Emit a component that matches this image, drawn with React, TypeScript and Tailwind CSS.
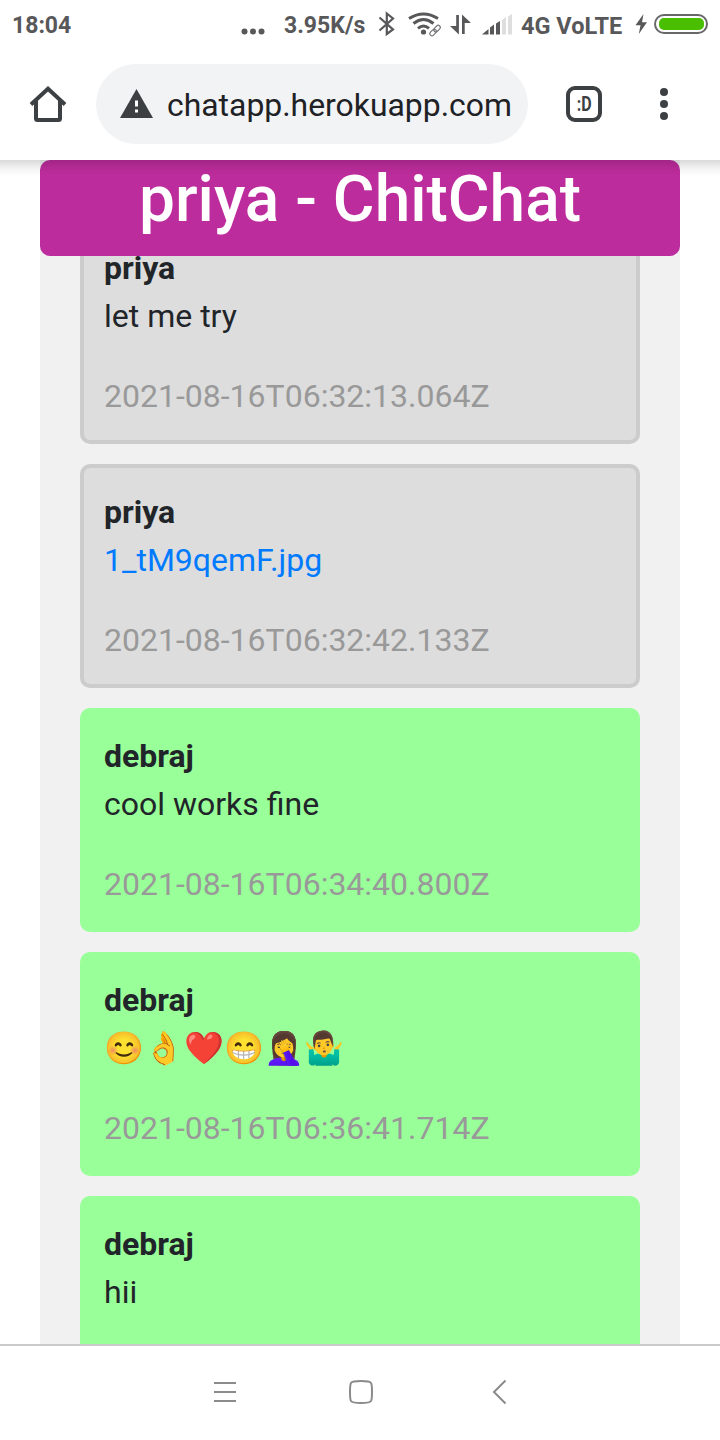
import type { ReactNode } from 'react';

type Message = { author: string; body: ReactNode; time?: string; own?: boolean };

const messages: Message[] = [
  { author: 'priya', body: 'let me try', time: '2021-08-16T06:32:13.064Z' },
  {
    author: 'priya',
    body: <a href="#file" className="text-[#007bff]">1_tM9qemF.jpg</a>,
    time: '2021-08-16T06:32:42.133Z',
  },
  { author: 'debraj', body: 'cool works fine', time: '2021-08-16T06:34:40.800Z', own: true },
  {
    author: 'debraj',
    body: (
      <span className="flex h-12 items-center">
        {['😊', '👌', '❤️', '😁', '🤦‍♀️', '🤷‍♂️'].map((e) => (
          <span key={e} className="flex w-10 justify-center font-['Noto_Color_Emoji',sans-serif]">{e}</span>
        ))}
      </span>
    ),
    time: '2021-08-16T06:36:41.714Z',
    own: true,
  },
  { author: 'debraj', body: 'hii', own: true },
];

function StatusBar() {
  return (
    <div className="flex h-[50px] shrink-0 items-center text-[23px] leading-[50px] font-bold text-[#58585a]">
      <span className="mt-[2px] ml-3 w-[229px] whitespace-nowrap">18:04</span>
      <svg width="24" height="50" viewBox="0 0 24 50" fill="#58585a">
        <circle cx="3.500" cy="31.500" r="3" /><circle cx="12" cy="31.500" r="3" /><circle cx="20.500" cy="31.500" r="3" />
      </svg>
      <span className="mt-[2px] ml-[19px] w-[94px] whitespace-nowrap">3.95K/s</span>
      <svg width="18" height="50" viewBox="0 0 18 50" fill="none" stroke="#58585a" strokeWidth="2.2">
        <path d="M1.500 17.500 15 29.500 8.800 34V13.500L15 18.500 1.500 30.500" />
      </svg>
      <svg className="ml-[11px]" width="36" height="50" viewBox="0 0 36 50" fill="none" stroke="#58585a" strokeWidth="2.9">
        <path d="M2 18.500Q16.500 9.500 31 18.500M6.500 23.500Q16.500 15.500 26.500 23.500M11 28.300Q16.500 23.500 22 28.300" />
        <circle cx="16.500" cy="32" r="2.600" fill="#58585a" stroke="none" />
        <g stroke="#fff" strokeWidth="4" transform="rotate(-45 28 30.500)">
          <rect x="22.500" y="28.500" width="11" height="4" rx="2" />
        </g>
        <g strokeWidth="1.2" stroke="#777779" transform="rotate(-45 28 30.500)">
          <rect x="21.500" y="28.500" width="7.500" height="4.200" rx="2.100" />
          <rect x="27" y="28.500" width="7.500" height="4.200" rx="2.100" />
        </g>
      </svg>
      <svg className="ml-[7px]" width="22" height="50" viewBox="0 0 22 50" fill="#58585a">
        <path d="M6.200 15H8.900V34.500L0 26H6.200ZM12 14.500 21 23H14.700V34H12Z" />
      </svg>
      <svg className="ml-[10px]" width="32" height="50" viewBox="0 0 32 50">
        <path fill="#58585a" d="M0 34.500 6.500 29V34.500ZM8 27.500 12 24.500V34.500H8ZM14 23.500 18 21V34.500H14Z" />
        <path fill="#dedede" d="M20 20 24 17V34.500H20ZM26 16.500 30 14V34.500H26Z" />
      </svg>
      <span className="mt-[2px] ml-[7px] w-[110px] text-[23.5px] whitespace-nowrap">4G VoLTE</span>
      <svg className="ml-1" width="14" height="50" viewBox="0 0 14 50" fill="#58585a">
        <path d="M8.500 14 .500 25.200H5.500L3.800 34 12 22.300H7Z" />
      </svg>
      <svg className="ml-[5px]" width="55" height="50" viewBox="0 0 55 50">
        <rect x="1" y="15" width="52" height="18" rx="9" fill="#fff" stroke="#68686a" strokeWidth="2" />
        <rect x="5" y="18" width="45" height="12" rx="5" fill="#49bf00" />
      </svg>
    </div>
  );
}

function BrowserBar() {
  return (
    <div className="flex h-[110px] shrink-0 items-center pb-[2px]">
      <svg className="ml-[28px]" width="40" height="40" viewBox="0 0 40 40" fill="none" stroke="#3c4043" strokeWidth="4">
        <path d="M3 20.500 20 4.800 37 20.500M8 17V34.500Q8 36 9.500 36H30.500Q32 36 32 34.500V17" />
      </svg>
      <div className="ml-[28px] flex h-20 w-[432px] items-center rounded-full bg-[#f1f3f4]">
        <svg className="ml-6 -mt-[3px]" width="33" height="30" viewBox="0 0 33 30">
          <path fill="#3c4043" d="M16.500 1 33 30H0Z" />
          <path fill="#fff" d="M15 12.500h3v6h-3zM15 21.500h3v3h-3z" />
        </svg>
        <span className="mt-[4px] ml-[14px] text-[31.9px] whitespace-nowrap text-[#202124]">chatapp.herokuapp.com</span>
      </div>
      <div className="ml-[38px] flex h-9 w-9 items-center justify-center rounded-[9px] border-4 border-[#3c4043] text-[20px] font-bold text-[#3c4043]">
        <span className="scale-x-80">:D</span>
      </div>
      <svg className="ml-[58px]" width="8" height="32" viewBox="0 0 8 32" fill="#3c4043">
        <circle cx="4" cy="4" r="4" /><circle cx="4" cy="16" r="4" /><circle cx="4" cy="28" r="4" />
      </svg>
    </div>
  );
}

function Card({ author, body, time, own }: Message) {
  return (
    <article
      className={`h-56 shrink-0 rounded-[10px] border-4 p-5 text-[32px] leading-[48px] text-[#212529] ${
        own ? 'border-[#99ff99] bg-[#99ff99]' : 'border-[#cccccc] bg-[#dddddd]'
      }`}
    >
      <h2 className="font-bold">{author}</h2>
      <div className="mb-8 h-12">{body}</div>
      {time && <time className="block text-[#999999]">{time}</time>}
    </article>
  );
}

function NavBar() {
  return (
    <nav className="flex h-24 shrink-0 items-center border-t-2 border-[#cacaca] bg-white">
      <svg className="ml-[213px]" width="24" height="26" viewBox="0 0 24 26" stroke="#8b8b8b" strokeWidth="2">
        <path d="M1 3H23M1 12H23M1 21H23" />
      </svg>
      <svg className="ml-[111px]" width="26" height="26" viewBox="0 0 26 26" fill="none" stroke="#8b8b8b" strokeWidth="2">
        <path d="M13 1C20.500 1 22 1.500 23 3C24 4.500 24 7 24 12S24 19.500 23 21C22 22.500 20.500 23 13 23S4 22.500 3 21C2 19.500 2 17 2 12S2 4.500 3 3C4 1.500 5.500 1 13 1Z" />
      </svg>
      <svg className="ml-[118px]" width="16" height="26" viewBox="0 0 16 26" fill="none" stroke="#8b8b8b" strokeWidth="2">
        <path d="M13.500 .500 2 12 13.500 23.500" />
      </svg>
    </nav>
  );
}

export default function App() {
  return (
    <div className="flex h-[1440px] w-[720px] flex-col overflow-hidden bg-white font-[Roboto,sans-serif]">
      <StatusBar />
      <BrowserBar />
      <main className="relative flex min-h-0 flex-1 flex-col overflow-hidden px-10">
        <div className="flex min-h-0 flex-1 flex-col bg-[#f1f1f1]">
          <h1 className="z-10 h-24 shrink-0 rounded-[10px] bg-[#bd2c9c] text-center text-[64px] leading-[79px] font-medium text-white">
            priya - ChitChat
          </h1>
          <div className="-mt-9 flex min-h-0 flex-1 flex-col gap-5 overflow-hidden px-10">
            {messages.map((m, i) => <Card key={i} {...m} />)}
          </div>
        </div>
        <div className="pointer-events-none absolute inset-x-0 top-0 z-20 h-4 bg-linear-to-b from-black/15 via-black/5 to-transparent" />
      </main>
      <NavBar />
    </div>
  );
}
